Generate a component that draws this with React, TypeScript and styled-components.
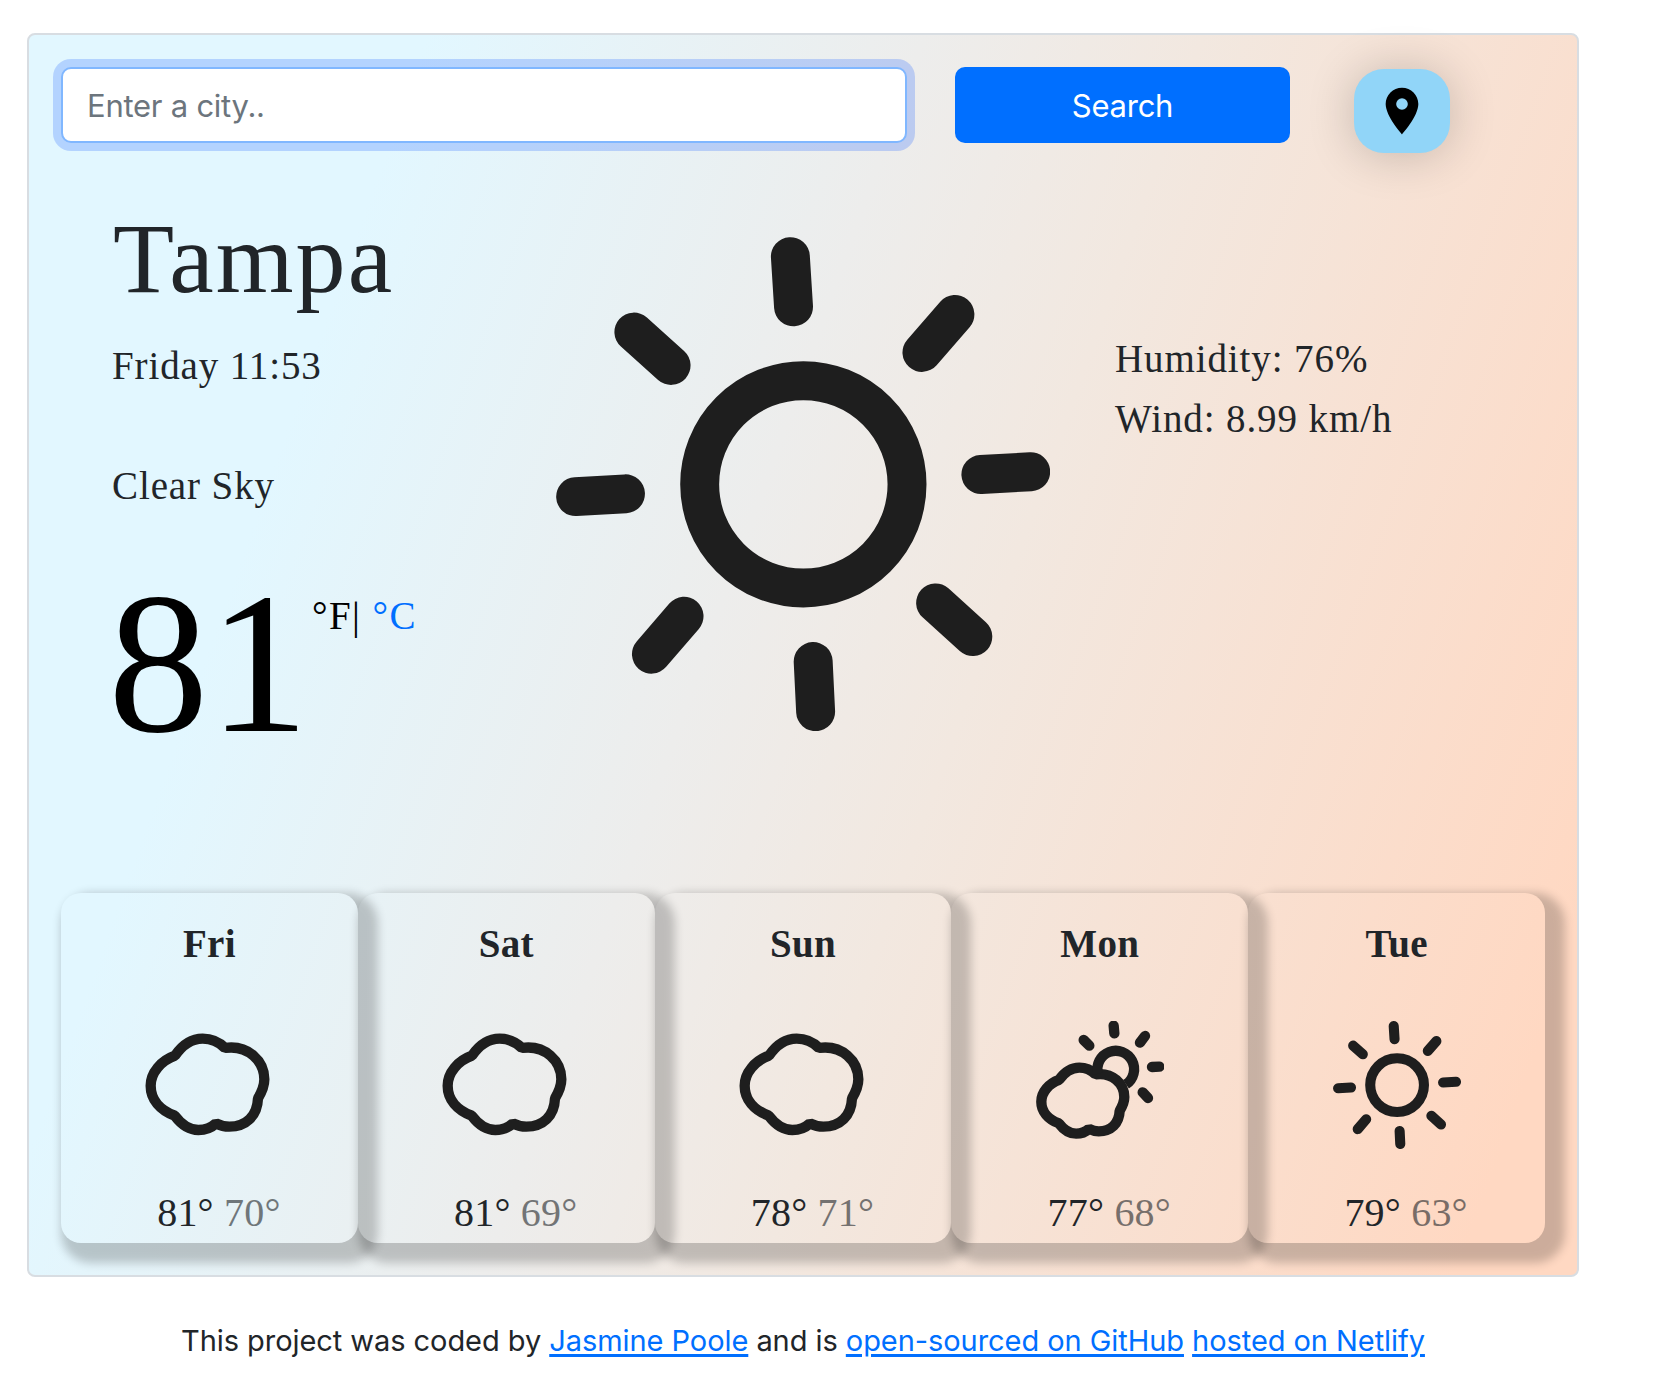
import React from "react";
import styled, { createGlobalStyle } from "styled-components";

const SERIF = '"Liberation Serif", serif';
const SANS = 'Inter, "Liberation Sans", sans-serif';
const INK = "#212529";
const BLUE = "#006fff";
const ICON = "#1e1e1e";

const GlobalStyle = createGlobalStyle`
  *, *::before, *::after { box-sizing: border-box; }
  body { margin: 0; background: #fff; color: ${INK}; font-family: ${SANS}; }
`;

const Page = styled.div`
  width: 1552px;
  margin: 33px 0 0 27px;
`;

const WeatherCard = styled.main`
  height: 1244px;
  padding: 32px;
  border: 2px solid #d8dde2;
  border-radius: 8px;
  background: linear-gradient(109.6deg, #e2f7ff 20%, #ededec 45%, #f2e8e0 59%, #ffd8c2 94%);
`;

const SearchForm = styled.form`
  display: flex;
  align-items: flex-start;
  height: 86px;
`;

const CityInput = styled.input`
  width: 846px;
  height: 76px;
  padding: 0 24px;
  border: 2px solid #80b7ff;
  border-radius: 10px;
  outline: none;
  background: #fff;
  box-shadow: 0 0 0 8px rgba(38, 104, 255, 0.25);
  font-family: ${SANS};
  font-size: 31px;
  letter-spacing: -0.25px;
  color: ${INK};
  &::placeholder { color: #6c757d; opacity: 1; }
`;

const SearchButton = styled.button`
  width: 335px;
  height: 76px;
  margin-left: 48px;
  padding: 0;
  border: 0;
  border-radius: 10px;
  background: ${BLUE};
  color: #fff;
  font-family: ${SANS};
  font-size: 31px;
  letter-spacing: -0.25px;
`;

const LocateButton = styled.button`
  display: flex;
  align-items: center;
  justify-content: center;
  width: 96px;
  height: 84px;
  margin: 2px 0 0 64px;
  padding: 0;
  border: 0;
  border-radius: 30px;
  background: #91d5f8;
  box-shadow: 0 2px 48px rgba(0, 0, 0, 0.2);
`;

const Current = styled.section`
  display: grid;
  grid-template-columns: 495px 494px 1fr;
  align-items: start;
  height: 740px;
`;

const Overview = styled.div`
  padding: 46px 0 0 51px;
`;

const City = styled.h1`
  margin: 0 0 17px;
  padding-left: 1px;
  font: 400 100px/120px ${SERIF};
  letter-spacing: 2.1px;
`;

const Line = styled.p`
  margin: 0;
  height: 60px;
  font: 400 39px/60px ${SERIF};
  letter-spacing: 0.9px;
  white-space: nowrap;
`;

const Gap = styled.div`
  height: 60px;
`;

const Temperature = styled.div`
  display: flex;
  align-items: flex-start;
  margin-top: 27px;
  color: #000;
`;

const Degrees = styled.strong`
  width: 203px;
  margin-left: -4px;
  font: 400 201px/240px ${SERIF};
`;

const Units = styled.span`
  margin: 43px 0 0 1px;
  font: 400 39px/60px ${SERIF};
  letter-spacing: 1.4px;
  white-space: nowrap;
`;

const UnitLink = styled.a`
  color: ${BLUE};
`;

const HeroIcon = styled.div`
  margin-top: 84px;
  line-height: 0;
`;

const Details = styled.div`
  padding: 176px 0 0 65px;
`;

const Forecast = styled.section`
  display: grid;
  grid-template-columns: repeat(5, 1fr);
  height: 350px;
`;

const Day = styled.article`
  display: flex;
  flex-direction: column;
  align-items: center;
  padding-top: 21px;
  border-radius: 20px;
  box-shadow: 10px 10px 10px 10px rgba(0, 0, 0, 0.2);
`;

const DayName = styled.h2`
  margin: 0 0 47px;
  font: 700 39px/60px ${SERIF};
  letter-spacing: 0.3px;
`;

const Range = styled.div`
  margin-top: 34px;
  padding-left: 19px;
  font: 400 40px/60px ${SERIF};
  letter-spacing: 0.2px;
`;

const Low = styled.span`
  opacity: 0.6;
`;

const Footer = styled.footer`
  margin-top: 42px;
  text-align: center;
  font-size: 29px;
  line-height: 44px;
  letter-spacing: -0.06px;
  white-space: nowrap;
`;

const FooterLink = styled.a`
  color: ${BLUE};
  text-decoration: underline;
  text-decoration-thickness: 3px;
  text-underline-offset: 3px;
`;

type Kind = "sun" | "cloud" | "partly";

const CLOUD =
  "M112 107C134 75 162 56 195 56C221 56 245 67 262 84C332 74 380 124 380 178C380 200 373 215 361 235C359 288 325 320 275 320C260 320 247 316 235 310C222 322 205 330 182 330C152 330 132 315 111 287C67 270 39 238 39 197C39 158 70 122 112 107Z";

function SunIcon({ size }: { size: number }) {
  return (
    <svg width={size} height={size} viewBox="74 76 1408 1408" fill="none" stroke={ICON} strokeWidth="111" strokeLinecap="round">
      <circle cx="779" cy="781" r="295.5" />
      <path d="M742 132L751 275M807 1286L814 1429M130 816L272 808M1285 753L1427 745M1211 297L1117 405M296 347L402 442M439 1157L346 1265M1156 1119L1262 1215" />
    </svg>
  );
}

function CloudIcon({ size }: { size: number }) {
  return (
    <svg width={size} height={size} viewBox="22 3 384 384" fill="none" stroke={ICON} strokeWidth="31" strokeLinejoin="bevel">
      <path d={CLOUD} />
    </svg>
  );
}

function PartlyIcon({ size }: { size: number }) {
  return (
    <svg width={size} height={size} viewBox="18 18 384 384" fill="none" stroke={ICON} strokeWidth="31" strokeLinejoin="bevel">
      <path d={CLOUD} transform="translate(5.5 117.5) scale(0.73 0.723)" strokeWidth="42.6" />
      <path d="M204 176A55 55 0 1 1 288 208" />
      <path strokeLinecap="round" d="M251 32L253 55M345 63L330 83M161 75L178 92M366 156L388 155M338 232L354 249" />
    </svg>
  );
}

function WeatherIcon({ kind, size }: { kind: Kind; size: number }) {
  if (kind === "sun") return <SunIcon size={size} />;
  if (kind === "cloud") return <CloudIcon size={size} />;
  return <PartlyIcon size={size} />;
}

const days: { name: string; kind: Kind; high: number; low: number }[] = [
  { name: "Fri", kind: "cloud", high: 81, low: 70 },
  { name: "Sat", kind: "cloud", high: 81, low: 69 },
  { name: "Sun", kind: "cloud", high: 78, low: 71 },
  { name: "Mon", kind: "partly", high: 77, low: 68 },
  { name: "Tue", kind: "sun", high: 79, low: 63 },
];

export default function App() {
  return (
    <>
      <GlobalStyle />
      <Page>
        <WeatherCard>
          <SearchForm onSubmit={(e) => e.preventDefault()}>
            <CityInput type="text" placeholder="Enter a city.." />
            <SearchButton type="submit">Search</SearchButton>
            <LocateButton type="button" aria-label="Use current location">
              <svg width="56" height="56" viewBox="0 0 24 24">
                <path d="M12 2C8.13 2 5 5.13 5 9c0 5.25 7 13 7 13s7-7.75 7-13c0-3.87-3.13-7-7-7zm0 9.5a2.5 2.5 0 0 1 0-5 2.5 2.5 0 0 1 0 5z" />
              </svg>
            </LocateButton>
          </SearchForm>
          <Current>
            <Overview>
              <City>Tampa</City>
              <Line>Friday 11:53</Line>
              <Gap />
              <Line>Clear Sky</Line>
              <Temperature>
                <Degrees>81</Degrees>
                <Units>
                  °F| <UnitLink>°C</UnitLink>
                </Units>
              </Temperature>
            </Overview>
            <HeroIcon>
              <WeatherIcon kind="sun" size={494} />
            </HeroIcon>
            <Details>
              <Line>Humidity: 76%</Line>
              <Line>Wind: 8.99 km/h</Line>
            </Details>
          </Current>
          <Forecast>
            {days.map((d) => (
              <Day key={d.name}>
                <DayName>{d.name}</DayName>
                <WeatherIcon kind={d.kind} size={128} />
                <Range>
                  {d.high}° <Low>{d.low}°</Low>
                </Range>
              </Day>
            ))}
          </Forecast>
        </WeatherCard>
        <Footer>
          This project was coded by <FooterLink>Jasmine Poole</FooterLink> and is{" "}
          <FooterLink>open-sourced on GitHub</FooterLink> <FooterLink>hosted on Netlify</FooterLink>
        </Footer>
      </Page>
    </>
  );
}
